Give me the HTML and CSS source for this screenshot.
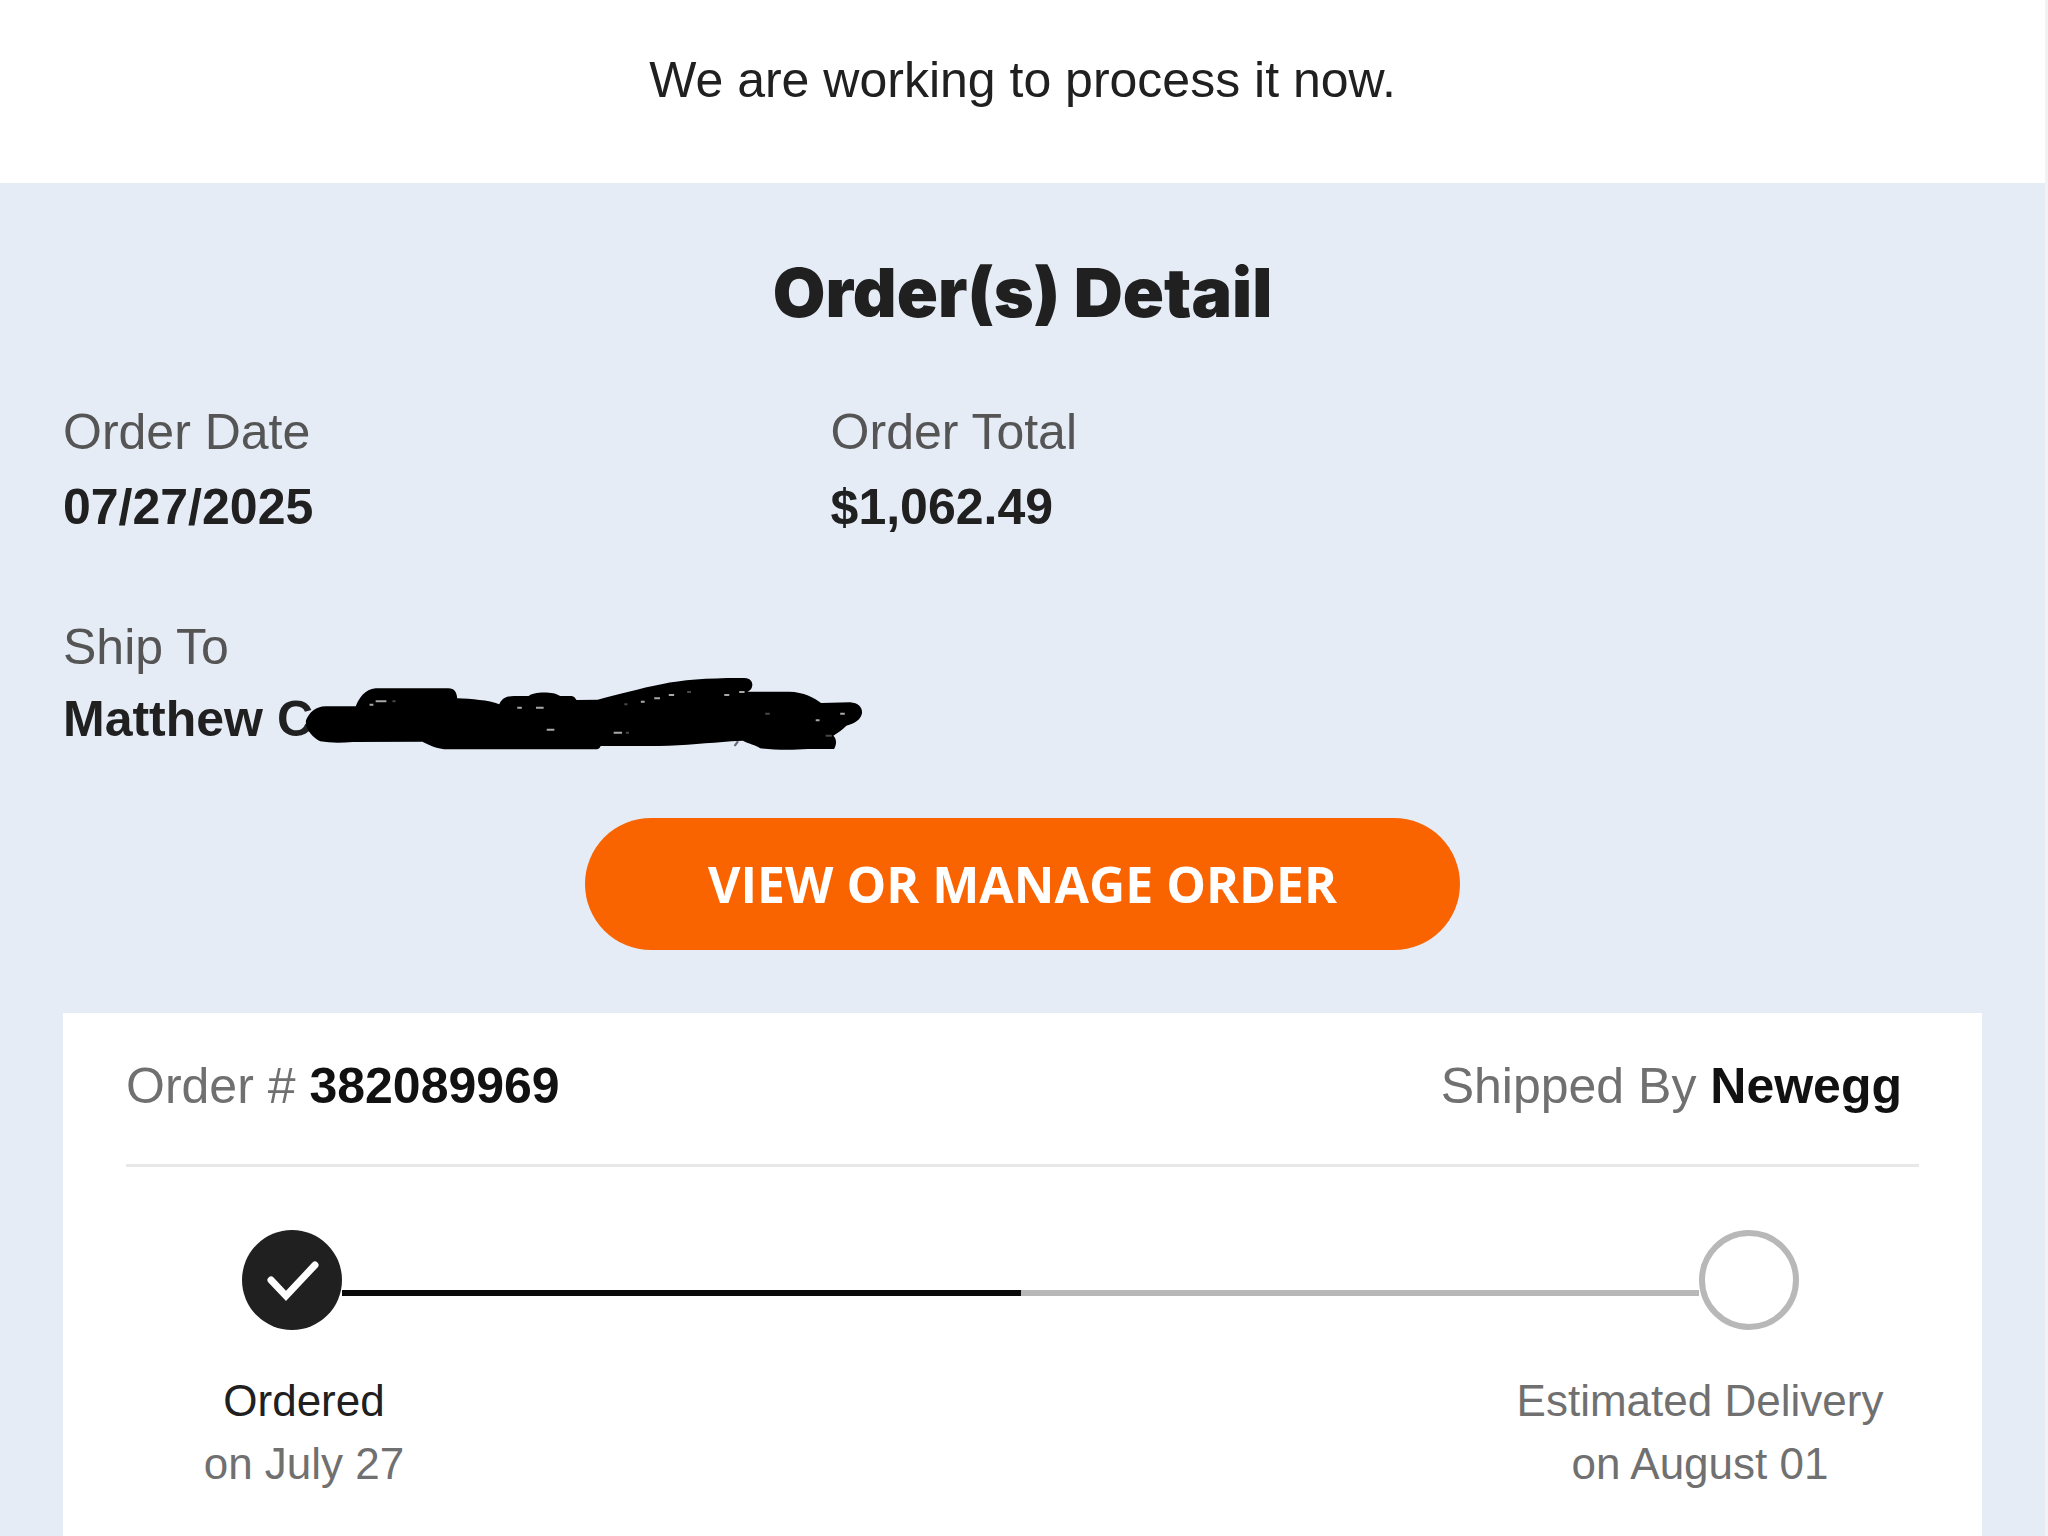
FILE: index.html
```html
<!DOCTYPE html>
<html lang="en">
<head>
<meta charset="utf-8">
<meta name="viewport" content="width=device-width, initial-scale=1">
<title>Order Confirmation</title>
<link rel="stylesheet" href="styles.css">
</head>
<body>
<div class="page">
  <header class="intro">
    <p class="intro-text">We are working to process it now.</p>
  </header>
  <main class="detail">
    <h1 class="title">Order(s) Detail</h1>
    <dl class="summary">
      <div class="field">
        <dt>Order Date</dt>
        <dd>07/27/2025</dd>
      </div>
      <div class="field">
        <dt>Order Total</dt>
        <dd>$1,062.49</dd>
      </div>
      <div class="field field-ship">
        <dt>Ship To</dt>
        <dd class="recipient">Matthew C
          <svg class="scribble" viewBox="0 0 1568 330" preserveAspectRatio="none" aria-hidden="true">
            <path d="M68 178C76 156 92 136 120 136L198 136C206 112 222 84 250 82L440 82C456 82 462 94 463 112C500 114 545 117 573 130C580 110 594 105 612 105L650 105C660 92 715 90 732 105L762 105C768 105 772 112 775 117L830 116C880 102 940 82 1000 69C1050 56 1130 50 1215 51C1230 52 1236 64 1234 75C1233 83 1230 88 1222 92L1330 92C1370 93 1395 110 1414 126L1490 124C1512 126 1522 140 1521 156C1518 176 1502 188 1480 194C1470 206 1460 214 1446 224C1454 232 1456 248 1448 264L1380 264C1330 268 1290 266 1255 262C1245 252 1222 248 1210 239L1180 241C1120 246 1060 254 990 255L838 255C836 262 832 265 824 265L440 265C408 264 390 252 372 242L190 243C160 246 130 246 105 241C88 232 64 205 68 178Z"/>
            <path class="fleck" d="M1197 241L1188 255"/>
            <path class="gaps" d="M234 131h10M250 121h28M620 140h12M669 140h20M697 206h20M872 215h22M943 122h10M978 112h15M1016 102h14M1161 102h13M1200 93h14M1400 178h10M1464 158h12"/>
            <path class="gaps gaps-faint" d="M294 121h8M900 130h8M904 215h8M1064 93h10M1268 158h12M1426 224h16"/>
          </svg>
        </dd>
      </div>
    </dl>
    <a class="cta" href="#order">VIEW OR MANAGE ORDER</a>
    <section class="card" id="order">
      <div class="card-head">
        <p>Order # <strong>382089969</strong></p>
        <p>Shipped By <strong>Newegg</strong></p>
      </div>
      <div class="track">
        <svg class="dot" viewBox="0 0 100 100" aria-hidden="true">
          <circle cx="50" cy="50" r="50" fill="#202020"/>
          <path d="M29 50L44 66L73 35" fill="none" stroke="#fff" stroke-width="7" stroke-linecap="round"/>
        </svg>
        <span class="bar bar-done"></span>
        <span class="bar"></span>
        <svg class="dot" viewBox="0 0 100 100" aria-hidden="true">
          <circle cx="50" cy="50" r="47" fill="#fff" stroke="#b8b8b8" stroke-width="6"/>
        </svg>
      </div>
      <div class="steps">
        <p class="step step-start"><span class="step-name">Ordered</span><br>on July 27</p>
        <p class="step step-end">Estimated Delivery<br>on August 01</p>
      </div>
    </section>
  </main>
</div>
</body>
</html>
```
FILE: styles.css
```css
* {
  box-sizing: border-box;
}

body,
p,
h1,
dl,
dd {
  margin: 0;
}

body {
  background: #f2f2f2;
  color: #202020;
  font-family: "Liberation Sans", Arial, sans-serif;
  font-size: 50px;
  line-height: 75px;
}

.page {
  display: flex;
  flex-direction: column;
  min-height: 100vh;
  margin-right: 3px;
  background: #fff;
}

.intro {
  padding: 43px 63px 65px;
  text-align: center;
}

.detail {
  display: flex;
  flex: 1;
  flex-direction: column;
  padding: 61px 63px 0;
  background: #e5ecf6;
}

.title {
  font-family: Inter, "Arial Black", sans-serif;
  font-size: 68px;
  font-weight: 900;
  line-height: 96px;
  text-align: center;
}

.summary {
  display: grid;
  grid-template-columns: 40% 60%;
  row-gap: 66px;
  padding-top: 55px;
}

.field dt {
  color: #555;
}

.field dd {
  font-weight: 700;
}

.field-ship {
  grid-column: 1 / -1;
  line-height: 72px;
}

.recipient {
  position: relative;
}

.scribble {
  position: absolute;
  top: -22px;
  left: 217px;
  width: 600px;
  height: 110px;
}

.fleck {
  stroke: #667;
  stroke-width: 6px;
}

.gaps {
  fill: none;
  stroke: #a8a8a8;
  stroke-width: 6px;
}

.gaps-faint {
  stroke: #484848;
}

.cta {
  align-self: center;
  margin: 63px 0;
  padding: 0 123px;
  border-radius: 66px;
  background: #f96400;
  color: #fff;
  font-family: "Open Sans", sans-serif;
  font-weight: 700;
  line-height: 132px;
  text-decoration: none;
}

.card {
  flex: 1;
  padding: 36px 63px 28px;
  background: #fff;
  color: #707070;
}

.card-head {
  display: flex;
  justify-content: space-between;
  padding: 0 17px 40px 0;
  border-bottom: 3px solid #e8e8e8;
}

.card-head strong {
  color: #111;
}

.track {
  display: flex;
  align-items: center;
  padding: 63px 120px 39px 116px;
}

.dot {
  width: 100px;
  height: 100px;
}

.bar {
  flex: 1;
  height: 6px;
  margin-top: 26px;
  background: #b8b8b8;
}

.bar-done {
  background: #0a0a0a;
}

.steps {
  display: flex;
  justify-content: space-between;
  font-size: 44px;
  line-height: 63px;
  text-align: center;
}

.step-start {
  width: 356px;
}

.step-end {
  width: 438px;
}

.step-name {
  color: #202020;
}
```
